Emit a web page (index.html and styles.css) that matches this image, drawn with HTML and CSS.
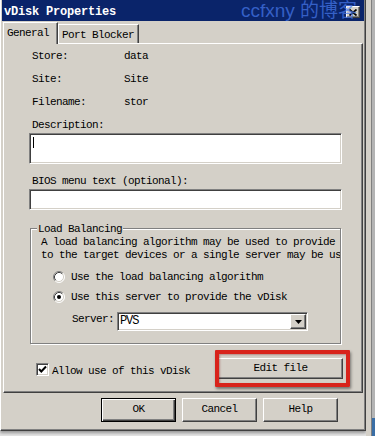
FILE: index.html
```html
<!DOCTYPE html>
<html>
<head>
<meta charset="utf-8">
<link rel="stylesheet" href="styles.css">
</head>
<body>
<div class="screen">
  <div class="dialog">
    <div class="titlebar">
      <span class="title">vDisk Properties</span>
      <span class="close btn-raised"><svg width="8" height="7" viewBox="0 0 8 7"><path d="M0.5 0.5 L7.5 6.5 M7.5 0.5 L0.5 6.5" stroke="#000" stroke-width="1.7"/></svg></span>
    </div>
    <div class="tabs">
      <div class="tab active">General</div>
      <div class="tab other">Port Blocker</div>
    </div>
    <div class="panel">
      <div class="info"><span class="k">Store:</span><span>data</span></div>
      <div class="info"><span class="k">Site:</span><span>Site</span></div>
      <div class="info"><span class="k">Filename:</span><span>stor</span></div>
      <div class="label">Description:</div>
      <div class="field tall"><span class="caret"></span></div>
      <div class="label bios">BIOS menu text (optional):</div>
      <div class="field short"></div>
      <div class="group">
        <div class="legend">Load Balancing</div>
        <div class="desc">
          <div>A load balancing algorithm may be used to provide</div>
          <div>to the target devices or a single server may be us</div>
        </div>
        <div class="radio first">
          <svg width="12" height="12" viewBox="0 0 12 12"><circle cx="6" cy="6" r="5" fill="#fff"/><path d="M2.11 9.89 A5.5 5.5 0 0 1 9.89 2.11" stroke="#808080" fill="none"/><path d="M9.89 2.11 A5.5 5.5 0 0 1 2.11 9.89" stroke="#fff" fill="none"/><path d="M2.82 9.18 A4.5 4.5 0 0 1 9.18 2.82" stroke="#404040" fill="none"/><path d="M9.18 2.82 A4.5 4.5 0 0 1 2.82 9.18" stroke="#d4d0c8" fill="none"/></svg>
          <span class="rtext">Use the load balancing algorithm</span>
        </div>
        <div class="radio second">
          <svg width="12" height="12" viewBox="0 0 12 12"><circle cx="6" cy="6" r="5" fill="#fff"/><path d="M2.11 9.89 A5.5 5.5 0 0 1 9.89 2.11" stroke="#808080" fill="none"/><path d="M9.89 2.11 A5.5 5.5 0 0 1 2.11 9.89" stroke="#fff" fill="none"/><path d="M2.82 9.18 A4.5 4.5 0 0 1 9.18 2.82" stroke="#404040" fill="none"/><path d="M9.18 2.82 A4.5 4.5 0 0 1 2.82 9.18" stroke="#d4d0c8" fill="none"/><circle cx="6" cy="6" r="2" fill="#000"/></svg>
          <span class="rtext">Use this server to provide the vDisk</span>
        </div>
        <div class="server">
          <span class="slabel">Server:</span>
          <div class="combo">
            <span class="cval">PVS</span>
            <span class="drop btn-raised"><svg width="7" height="4" viewBox="0 0 7 4"><path d="M0 0 H7 L3.5 4 Z" fill="#000"/></svg></span>
          </div>
        </div>
      </div>
      <div class="bottomrow">
        <div class="check">
          <span class="cbox"><svg width="9" height="9" viewBox="0 0 9 9"><path d="M1 4 L3.3 6.5 L8 1.5" stroke="#000" stroke-width="2" fill="none"/></svg></span>
          <span class="ctext">Allow use of this vDisk</span>
        </div>
        <div class="editwrap">
          <div class="btn btn-raised edit">Edit file</div>
          <span class="highlight"></span>
        </div>
      </div>
    </div>
    <div class="buttons">
      <div class="btn default">OK</div>
      <div class="btn btn-raised">Cancel</div>
      <div class="btn btn-raised">Help</div>
    </div>
  </div>
  <div class="side"><div class="sidebar"></div></div>
</div>
<div class="watermark">ccfxny 的博客</div>
</body>
</html>
```

FILE: styles.css
```css
* { box-sizing: border-box; }
html, body { margin: 0; padding: 0; }
body {
  width: 375px;
  height: 436px;
  overflow: hidden;
  position: relative;
  background: #e4e4e4;
  font-family: "Liberation Mono", "DejaVu Sans Mono", monospace;
  font-size: 11px;
  letter-spacing: -0.6px;
  line-height: 13px;
  color: #000;
}
.screen { display: flex; height: 436px; }
.dialog {
  width: 366px;
  height: 431px;
  flex: none;
  background: #d4d0c8;
  border-left: 1px solid #fff;
  border-right: 1px solid #404040;
  border-bottom: 1px solid #404040;
  padding: 0 1px;
  box-shadow: inset -1px -1px #808080, 0 2px 3px rgba(0,0,0,0.35);
  display: flex;
  flex-direction: column;
}
.titlebar {
  height: 21px;
  flex: none;
  background: #0a246a;
  display: flex;
  align-items: flex-start;
}
.title {
  color: #fff;
  font-weight: bold;
  font-size: 12px;
  letter-spacing: -0.2px;
  line-height: 13px;
  padding: 6px 0 0 2px;
}
.btn-raised {
  background: #d4d0c8;
  border: 1px solid;
  border-color: #fff #404040 #404040 #fff;
  box-shadow: inset -1px -1px #808080;
}
.close {
  margin: 6px 4px 0 auto;
  width: 14px;
  height: 12px;
  display: flex;
  align-items: center;
  justify-content: center;
}
.close svg { display: block; }
.tabs {
  height: 22px;
  flex: none;
  display: flex;
  align-items: flex-end;
  padding-left: 1px;
  position: relative;
  z-index: 2;
}
.tab {
  background: #d4d0c8;
  border-top: 1px solid #fff;
  border-left: 1px solid #fff;
  border-right: 1px solid #404040;
  box-shadow: inset -1px 0 #808080;
  padding: 4px 0 0 3px;
  white-space: nowrap;
}
.tab.active { width: 55px; height: 22px; margin-bottom: -1px; }
.tab.other { width: 81px; height: 19px; border-left-color: #fff; }
.panel {
  flex: none;
  height: 350px;
  margin: 0 1px;
  border-top: 1px solid #fff;
  border-left: 1px solid #fff;
  border-right: 1px solid #404040;
  border-bottom: 1px solid #404040;
  box-shadow: inset -1px -1px #808080;
  padding: 6px 20px 0 25px;
}
.info { display: flex; padding-left: 3px; margin-bottom: 10px; white-space: nowrap; }
.info .k { width: 92px; }
.label { padding-left: 3px; white-space: nowrap; }
.label.bios { margin-top: 11px; }
.field {
  background: #fff;
  border: 1px solid;
  border-color: #808080 #fff #fff #808080;
  box-shadow: inset 1px 1px #404040, inset -1px -1px #d4d0c8;
  margin-top: 1px;
}
.field.tall { height: 31px; padding: 2px 0 0 2px; }
.field.short { height: 21px; }
.caret { display: block; width: 1px; height: 11px; background: #000; margin: 1px 0 0 1px; }
.group {
  margin: 18px 0 0 1px;
  width: 311px;
  border: 1px solid #808080;
  box-shadow: inset 1px 1px #fff, 1px 1px #fff;
  padding: 0 0 12px 0;
}
.legend {
  width: fit-content;
  margin: -6px 0 0 6px;
  padding: 0 1px;
  background: #d4d0c8;
  white-space: nowrap;
}
.desc { padding-left: 10px; white-space: nowrap; overflow: hidden; }
.radio { display: flex; align-items: flex-start; margin-left: 22px; white-space: nowrap; }
.radio svg { display: block; flex: none; }
.radio.first { margin-top: 9px; }
.radio.second { margin-top: 7px; }
.rtext { margin-left: 6px; margin-top: 0; }
.server { display: flex; align-items: flex-start; margin-top: 8px; padding-left: 41px; }
.slabel { width: 45px; margin-top: 1px; white-space: nowrap; }
.combo {
  width: 191px;
  height: 19px;
  background: #fff;
  border: 1px solid;
  border-color: #808080 #fff #fff #808080;
  box-shadow: inset 1px 1px #404040, inset -1px -1px #d4d0c8;
  padding: 1px;
  display: flex;
  align-items: flex-start;
}
.cval { font-size: 12px; letter-spacing: -1.1px; line-height: 15px; padding-left: 1px; }
.drop {
  margin-left: auto;
  width: 16px;
  height: 15px;
  display: flex;
  align-items: center;
  justify-content: center;
}
.drop svg { display: block; }
.bottomrow {
  margin-top: 14px;
  height: 21px;
  display: flex;
  align-items: flex-start;
  justify-content: space-between;
}
.check { display: flex; align-items: flex-start; padding-left: 7px; white-space: nowrap; }
.cbox {
  width: 13px;
  height: 13px;
  margin-top: 5px;
  background: #fff;
  border: 1px solid;
  border-color: #808080 #fff #fff #808080;
  box-shadow: inset 1px 1px #404040, inset -1px -1px #d4d0c8;
  display: flex;
  align-items: center;
  justify-content: center;
}
.cbox svg { display: block; }
.ctext { margin: 7px 0 0 3px; }
.editwrap { position: relative; margin-right: -1px; }
.btn { text-align: center; white-space: nowrap; }
.edit { width: 125px; height: 21px; padding-top: 3px; }
.highlight {
  position: absolute;
  left: -3px;
  top: -8px;
  right: -7px;
  bottom: -8px;
  border: 4px solid #d8231b;
  border-radius: 1px;
  box-shadow: 1px 2px 3px rgba(0,0,0,0.45), inset 1px 1px 2px rgba(120,0,0,0.35);
}
.buttons {
  margin-top: 5px;
  display: flex;
  justify-content: flex-end;
  gap: 6px;
  padding-right: 26px;
}
.buttons .btn { width: 75px; height: 24px; padding-top: 4px; }
.btn.default {
  background: #d4d0c8;
  border: 1px solid #000;
  box-shadow: inset 1px 1px #fff, inset -1px -1px #404040, inset -2px -2px #808080;
}
.side {
  flex: 1;
  height: 436px;
  background: linear-gradient(to right, #d4d0c8 0 5px, #808080 5px 6px, #b4b4b4 6px);
  position: relative;
  display: flex;
  flex-direction: column;
  justify-content: flex-end;
}
.sidebar { height: 18px; margin-left: 6px; background: #3a6ea5; }
.watermark {
  position: absolute;
  left: 241px;
  top: 1px;
  font-family: "Liberation Sans", "Noto Sans CJK SC", sans-serif;
  font-size: 19px;
  line-height: 19px;
  letter-spacing: 0;
  color: rgba(70, 120, 235, 0.72);
  white-space: nowrap;
  z-index: 5;
}
```
